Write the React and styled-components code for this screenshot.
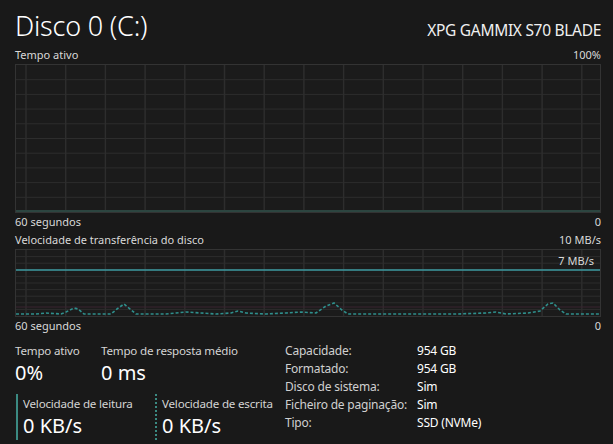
import React from "react";
import styled, { createGlobalStyle } from "styled-components";

const GlobalStyle = createGlobalStyle`
  html, body {
    margin: 0;
    background: #191919;
  }
  body {
    font-family: "Noto Sans", "Open Sans", sans-serif;
    color: #e6e6e6;
  }
`;

const CHART_W = 586;

const Grid = ({ height, rows, offset }) => {
  const hLines = [];
  for (let i = 1; i < rows; i++) {
    const y = (height / rows) * i;
    hLines.push(
      <line key={"h" + i} x1="0" x2={CHART_W} y1={y} y2={y} stroke="#2d2d2d" strokeWidth="1" />
    );
  }
  const vLines = [];
  for (let x = offset; x < CHART_W; x += 39.7) {
    vLines.push(
      <line key={"v" + x} x1={x} x2={x} y1="0" y2={height} stroke="#2d2d2d" strokeWidth="1.5" />
    );
  }
  return (
    <>
      {hLines}
      {vLines}
    </>
  );
};

// little bursts of write activity in the transfer chart
const transferPoints = [
  [0, 64], [20, 64], [30, 63], [45, 64], [50, 62], [58, 58], [62, 59], [68, 64],
  [95, 64], [101, 59], [108, 54], [114, 59], [120, 64], [150, 64], [160, 63],
  [170, 62], [185, 63], [200, 64], [215, 63], [222, 61], [230, 63], [250, 64],
  [270, 63], [285, 62], [300, 63], [310, 56], [318, 53], [326, 60], [332, 64],
  [360, 64], [385, 64], [410, 64], [440, 64], [470, 63], [480, 62], [490, 64],
  [512, 63], [524, 61], [532, 54], [537, 53], [544, 60], [550, 64], [570, 64], [586, 64],
];

const Header = styled.div`
  display: flex;
  justify-content: space-between;
  align-items: baseline;
  height: 40px;
`;

const Title = styled.h1`
  margin: 0;
  font-size: 27px;
  font-weight: 300;
  color: #ffffff;
  line-height: 40px;
  letter-spacing: -0.2px;
`;

const Model = styled.div`
  font-size: 15.5px;
  font-weight: 400;
  color: #f0f0f0;
  letter-spacing: -0.3px;
`;

const Page = styled.div`
  width: 586px;
  padding: 6px 12px 0 15px;
`;

const AxisRow = styled.div`
  display: flex;
  justify-content: space-between;
  font-size: 11px;
  line-height: 14px;
  color: #d8d8d8;
  margin-top: ${(p) => p.$top || 0}px;
  margin-bottom: 2px;
`;

const ChartBox = styled.div`
  position: relative;
  height: ${(p) => p.$h}px;
  border: 1px solid #333333;
  background: #1b1b1b;
  box-sizing: border-box;

  svg {
    display: block;
  }
`;

const ScaleTag = styled.span`
  position: absolute;
  right: 6px;
  top: 3px;
  font-size: 11px;
  color: #d8d8d8;
`;

const Bottom = styled.div`
  display: flex;
  margin-top: 10px;
`;

const Stats = styled.div`
  width: 270px;
  display: flex;
  flex-direction: column;
  gap: 7px;
`;

const StatRow = styled.div`
  display: flex;
`;

const Stat = styled.div`
  width: ${(p) => p.$w}px;
  padding-left: ${(p) => (p.$bar ? 5 : 0)}px;
  padding-top: ${(p) => (p.$bar ? 2 : 0)}px;
  box-sizing: border-box;
  border-left: ${(p) =>
    p.$bar === "solid" ? "2px solid #3b8a82" : p.$bar === "dashed" ? "2px dotted #3b8a82" : "none"};
  margin-left: ${(p) => (p.$bar ? 1 : 0)}px;
`;

const StatLabel = styled.div`
  font-size: 11.6px;
  line-height: 16px;
  color: #d4d4d4;
  white-space: nowrap;
  letter-spacing: -0.2px;
`;

const StatValue = styled.div`
  font-size: 20px;
  line-height: 28px;
  color: #ffffff;
  font-weight: 400;
`;

const InfoTable = styled.div`
  display: grid;
  grid-template-columns: 132px auto;
  grid-auto-rows: 17.8px;
  align-items: center;
  font-size: 12px;
  letter-spacing: -0.2px;
  margin-top: -1px;
`;

const InfoKey = styled.span`
  color: #d0d0d0;
`;

const InfoVal = styled.span`
  color: #ffffff;
`;

const info = [
  ["Capacidade:", "954 GB"],
  ["Formatado:", "954 GB"],
  ["Disco de sistema:", "Sim"],
  ["Ficheiro de paginação:", "Sim"],
  ["Tipo:", "SSD (NVMe)"],
];

export default function App() {
  return (
    <>
      <GlobalStyle />
      <Page>
        <Header>
          <Title>Disco 0 (C:)</Title>
          <Model>XPG GAMMIX S70 BLADE</Model>
        </Header>

        <AxisRow $top={2}>
          <span>Tempo ativo</span>
          <span>100%</span>
        </AxisRow>
        <ChartBox $h={149}>
          <svg width={CHART_W - 2} height={147}>
            <Grid height={147} rows={10} offset={10} />
            <line x1="0" x2={CHART_W} y1="146" y2="146" stroke="#2c4540" strokeWidth="2" />
          </svg>
        </ChartBox>
        <AxisRow $top={2}>
          <span>60 segundos</span>
          <span>0</span>
        </AxisRow>

        <AxisRow $top={4}>
          <span>Velocidade de transferência do disco</span>
          <span>10 MB/s</span>
        </AxisRow>
        <ChartBox $h={68}>
          <svg width={CHART_W - 2} height={66}>
            <Grid height={66} rows={10} offset={10} />
            <line x1="0" x2={CHART_W} y1="57" y2="57" stroke="#3a2430" strokeWidth="1" />
            <line x1="0" x2={CHART_W} y1="20" y2="20" stroke="#3d9aa0" strokeWidth="1.5" />
            <polyline
              points={transferPoints.map((p) => p.join(",")).join(" ")}
              fill="none"
              stroke="#2f8f8c"
              strokeWidth="1.6"
              strokeDasharray="3 2"
            />
          </svg>
          <ScaleTag>7 MB/s</ScaleTag>
        </ChartBox>
        <AxisRow $top={2}>
          <span>60 segundos</span>
          <span>0</span>
        </AxisRow>

        <Bottom>
          <Stats>
            <StatRow>
              <Stat $w={86}>
                <StatLabel>Tempo ativo</StatLabel>
                <StatValue>0%</StatValue>
              </Stat>
              <Stat $w={170}>
                <StatLabel>Tempo de resposta médio</StatLabel>
                <StatValue>0 ms</StatValue>
              </Stat>
            </StatRow>
            <StatRow>
              <Stat $w={138} $bar="solid">
                <StatLabel>Velocidade de leitura</StatLabel>
                <StatValue>0 KB/s</StatValue>
              </Stat>
              <Stat $w={130} $bar="dashed">
                <StatLabel>Velocidade de escrita</StatLabel>
                <StatValue>0 KB/s</StatValue>
              </Stat>
            </StatRow>
          </Stats>
          <InfoTable>
            {info.map(([k, v]) => (
              <React.Fragment key={k}>
                <InfoKey>{k}</InfoKey>
                <InfoVal>{v}</InfoVal>
              </React.Fragment>
            ))}
          </InfoTable>
        </Bottom>
      </Page>
    </>
  );
}
